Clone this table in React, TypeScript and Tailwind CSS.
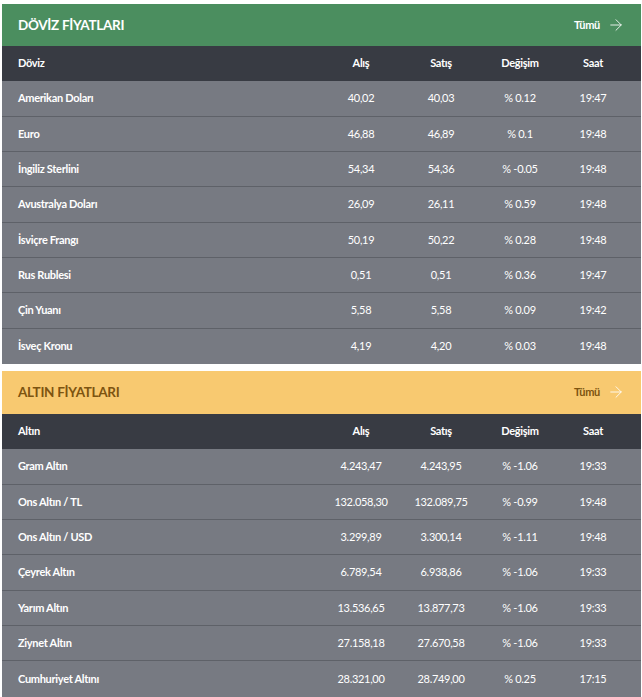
import { ArrowRight } from "lucide-react";

type Row = { name: string; alis: string; satis: string; degisim: string; saat: string };

const doviz: Row[] = [
  { name: "Amerikan Doları", alis: "40,02", satis: "40,03", degisim: "% 0.12", saat: "19:47" },
  { name: "Euro", alis: "46,88", satis: "46,89", degisim: "% 0.1", saat: "19:48" },
  { name: "İngiliz Sterlini", alis: "54,34", satis: "54,36", degisim: "% -0.05", saat: "19:48" },
  { name: "Avustralya Doları", alis: "26,09", satis: "26,11", degisim: "% 0.59", saat: "19:48" },
  { name: "İsviçre Frangı", alis: "50,19", satis: "50,22", degisim: "% 0.28", saat: "19:48" },
  { name: "Rus Rublesi", alis: "0,51", satis: "0,51", degisim: "% 0.36", saat: "19:47" },
  { name: "Çin Yuanı", alis: "5,58", satis: "5,58", degisim: "% 0.09", saat: "19:42" },
  { name: "İsveç Kronu", alis: "4,19", satis: "4,20", degisim: "% 0.03", saat: "19:48" },
];

const altin: Row[] = [
  { name: "Gram Altın", alis: "4.243,47", satis: "4.243,95", degisim: "% -1.06", saat: "19:33" },
  { name: "Ons Altın / TL", alis: "132.058,30", satis: "132.089,75", degisim: "% -0.99", saat: "19:48" },
  { name: "Ons Altın / USD", alis: "3.299,89", satis: "3.300,14", degisim: "% -1.11", saat: "19:48" },
  { name: "Çeyrek Altın", alis: "6.789,54", satis: "6.938,86", degisim: "% -1.06", saat: "19:33" },
  { name: "Yarım Altın", alis: "13.536,65", satis: "13.877,73", degisim: "% -1.06", saat: "19:33" },
  { name: "Ziynet Altın", alis: "27.158,18", satis: "27.670,58", degisim: "% -1.06", saat: "19:33" },
  { name: "Cumhuriyet Altını", alis: "28.321,00", satis: "28.749,00", degisim: "% 0.25", saat: "17:15" },
];

const cols = "grid grid-cols-[1fr_80px_80px_78px_68px] pr-[14px] items-center";

function PriceTable({
  title,
  first,
  rows,
  variant,
}: {
  title: string;
  first: string;
  rows: Row[];
  variant: "green" | "gold";
}) {
  const green = variant === "green";
  return (
    <section>
      {/* başlık */}
      <div
        className={`flex items-center justify-between pl-4 pr-4 ${
          green ? "h-[42px] bg-[#4b8e5f]" : "h-[43px] bg-[#f8c970]"
        }`}
      >
        <h2
          className={`text-[13.5px] font-bold tracking-[-0.3px] ${
            green ? "text-white" : "text-[#7d5410]"
          }`}
        >
          {title}
        </h2>
        <a className="flex items-center gap-[7px] text-[11px] font-bold tracking-[-0.3px]">
          <span className={green ? "text-white" : "text-[#7d5410]"}>Tümü</span>
          <ArrowRight className="w-[18px] h-[18px] text-white/90" strokeWidth={1.25} />
        </a>
      </div>

      {/* sütun başlıkları */}
      <div className={`${cols} h-[35.33px] bg-[#383b43] text-white text-[11px] font-bold tracking-[-0.3px]`}>
        <div className="pl-4">{first}</div>
        <div className="text-center">Alış</div>
        <div className="text-center">Satış</div>
        <div className="text-center">Değişim</div>
        <div className="text-center">Saat</div>
      </div>

      {rows.map((r, i) => (
        <div
          key={r.name}
          className={`${cols} h-[35.33px] bg-[#777a82] text-white text-[11px] tracking-[-0.3px] ${
            i < rows.length - 1 ? "border-b border-[#5e6168]" : ""
          }`}
        >
          <div className="pl-4 font-bold">{r.name}</div>
          <div className="text-center">{r.alis}</div>
          <div className="text-center">{r.satis}</div>
          <div className="text-center">{r.degisim}</div>
          <div className="text-center">{r.saat}</div>
        </div>
      ))}
    </section>
  );
}

export default function App() {
  return (
    <div className="bg-white w-[642px] h-[697px] overflow-hidden pt-1 pl-[2px] pr-[1px] font-['Lato','Noto_Sans',sans-serif]">
      <div className="flex flex-col gap-[7px]">
        <PriceTable title="DÖVİZ FİYATLARI" first="Döviz" rows={doviz} variant="green" />
        <PriceTable title="ALTIN FİYATLARI" first="Altın" rows={altin} variant="gold" />
      </div>
    </div>
  );
}
